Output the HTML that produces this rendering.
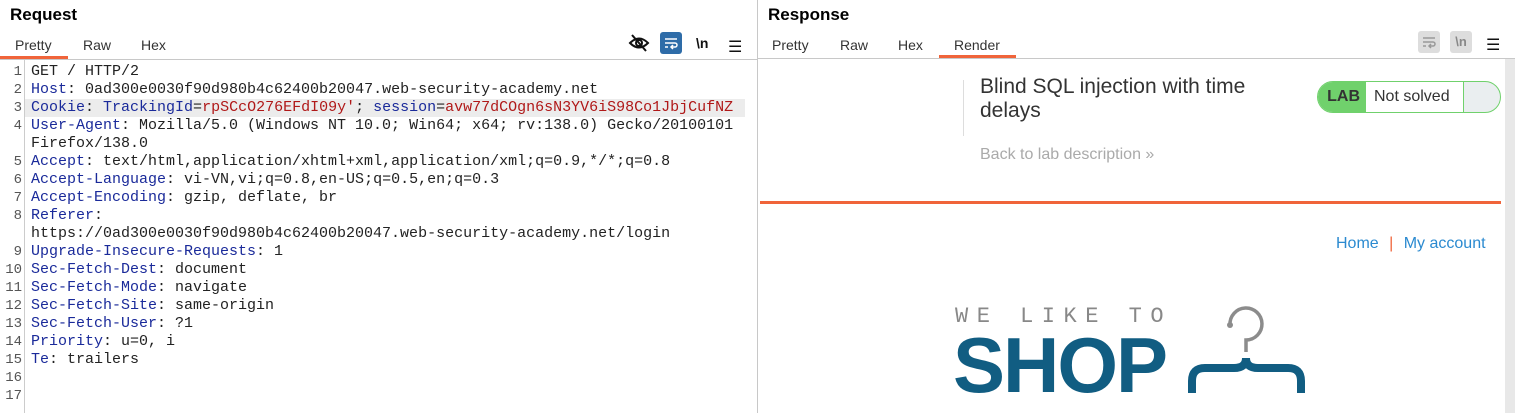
<!DOCTYPE html>
<html><head><style>
*{margin:0;padding:0;box-sizing:border-box}
body{width:1515px;height:413px;overflow:hidden;background:#fff;font-family:"Liberation Sans",sans-serif;position:relative}
.abs{position:absolute}
.h{font-weight:bold;font-size:17px;color:#000}
.tab{position:absolute;font-size:14px;color:#333;top:37px}
.code{position:absolute;left:31px;top:63px;font-family:"Liberation Mono",monospace;font-size:15px;line-height:18px;color:#222;white-space:pre}
.nums{position:absolute;left:0;width:22px;top:63px;font-family:"Liberation Mono",monospace;font-size:14px;line-height:18px;color:#555;text-align:right}
.k{color:#1a2a9a}.v{color:#b01818}
</style></head><body>
<div class="abs h" style="left:10px;top:5px">Request</div>
<div class="tab" style="left:15px">Pretty</div>
<div class="tab" style="left:83px">Raw</div>
<div class="tab" style="left:141px">Hex</div>
<div class="abs" style="left:0;top:56px;width:68px;height:3px;background:#f0643a"></div>
<div class="abs" style="left:0;top:59px;width:757px;height:1px;background:#c8c8c8"></div>
<svg class="abs" style="left:628px;top:33px" width="22" height="20" viewBox="0 0 22 20"><path d="M2 10 Q11 1 20 10 Q11 19 2 10Z" fill="none" stroke="#111" stroke-width="2"/><circle cx="11" cy="10" r="3" fill="none" stroke="#111" stroke-width="2"/><path d="M4 2 L18 18" stroke="#111" stroke-width="2"/></svg>
<div class="abs" style="left:660px;top:32px;width:22px;height:22px;border-radius:3px;background:#2e6ca8"></div>
<svg class="abs" style="left:663px;top:35px" width="16" height="16" viewBox="0 0 16 16"><path d="M2 4H14M2 8H12a2 2 0 0 1 0 4H8M10 10L8 12L10 14M2 12H5" fill="none" stroke="#fff" stroke-width="1.5"/></svg>
<div class="abs" style="left:696px;top:35px;font-size:14px;font-weight:bold;color:#111">\n</div>
<div class="abs" style="left:728px;top:37px;font-size:16px;color:#111">☰</div>
<div class="abs" style="left:24px;top:60px;width:1px;height:353px;background:#ccc"></div>
<div class="abs" style="left:25px;top:99px;width:720px;height:18px;background:#ececec"></div>
<div class="nums">1<br>2<br>3<br>4<br><br>5<br>6<br>7<br>8<br><br>9<br>10<br>11<br>12<br>13<br>14<br>15<br>16<br>17</div>
<div class="code">GET / HTTP/2
<span class="k">Host</span>: 0ad300e0030f90d980b4c62400b20047.web-security-academy.net
<span class="k">Cookie</span>: <span class="k">TrackingId</span>=<span class="v">rpSCcO276EFdI09y'</span>; <span class="k">session</span>=<span class="v">avw77dCOgn6sN3YV6iS98Co1JbjCufNZ</span>
<span class="k">User-Agent</span>: Mozilla/5.0 (Windows NT 10.0; Win64; x64; rv:138.0) Gecko/20100101
Firefox/138.0
<span class="k">Accept</span>: text/html,application/xhtml+xml,application/xml;q=0.9,*/*;q=0.8
<span class="k">Accept-Language</span>: vi-VN,vi;q=0.8,en-US;q=0.5,en;q=0.3
<span class="k">Accept-Encoding</span>: gzip, deflate, br
<span class="k">Referer</span>:
https://0ad300e0030f90d980b4c62400b20047.web-security-academy.net/login
<span class="k">Upgrade-Insecure-Requests</span>: 1
<span class="k">Sec-Fetch-Dest</span>: document
<span class="k">Sec-Fetch-Mode</span>: navigate
<span class="k">Sec-Fetch-Site</span>: same-origin
<span class="k">Sec-Fetch-User</span>: ?1
<span class="k">Priority</span>: u=0, i
<span class="k">Te</span>: trailers</div>
<div class="abs" style="left:757px;top:0;width:1px;height:413px;background:#c8c8c8"></div>

<div class="abs h" style="left:768px;top:5px">Response</div>
<div class="tab" style="left:772px;top:37px">Pretty</div>
<div class="tab" style="left:840px;top:37px">Raw</div>
<div class="tab" style="left:898px;top:37px">Hex</div>
<div class="tab" style="left:954px;top:37px">Render</div>
<div class="abs" style="left:939px;top:55px;width:77px;height:3px;background:#f0643a"></div>
<div class="abs" style="left:758px;top:58px;width:757px;height:1px;background:#c8c8c8"></div>
<div class="abs" style="left:1418px;top:31px;width:22px;height:22px;border-radius:3px;background:#ddd"></div>
<div class="abs" style="left:1450px;top:31px;width:22px;height:22px;border-radius:3px;background:#ddd;font-size:13px;color:#888;text-align:center;line-height:22px;font-weight:bold">\n</div>
<svg class="abs" style="left:1421px;top:34px" width="16" height="16" viewBox="0 0 16 16"><path d="M2 4H14M2 8H12a2 2 0 0 1 0 4H8M10 10L8 12L10 14M2 12H5" fill="none" stroke="#999" stroke-width="1.5"/></svg>
<div class="abs" style="left:1486px;top:35px;font-size:16px;color:#111">☰</div>
<div class="abs" style="left:1505px;top:59px;width:10px;height:354px;background:#e8e8e8"></div>

<div class="abs" style="left:963px;top:80px;width:1px;height:56px;background:#ddd"></div>
<div class="abs" style="left:980px;top:75px;font-size:21px;line-height:24px;color:#333">Blind SQL injection with time<br>delays</div>
<div class="abs" style="left:980px;top:146px;font-size:16px;color:#aaa">Back to lab description »</div>
<div class="abs" style="left:1317px;top:81px;width:184px;height:32px;border:1px solid #70d16c;border-radius:16px;background:#eaeef0;overflow:hidden">
<div class="abs" style="left:0;top:0;width:48px;height:30px;background:#70d16c;font-weight:bold;font-size:16px;color:#333;line-height:30px;text-align:right;padding-right:6px">LAB</div>
<div class="abs" style="left:48px;top:0;width:98px;height:30px;background:#fff;border-right:1px solid #70d16c;font-size:16px;color:#333;line-height:30px;padding-left:8px">Not solved</div>
</div>
<div class="abs" style="left:760px;top:201px;width:741px;height:3px;background:#f0643a"></div>
<div class="abs" style="left:1336px;top:235px;font-size:16px;color:#2b8ad0">Home <span style="color:#f0643a;margin:0 6px">|</span> My account</div>
<div class="abs" style="left:955px;top:304px;font-family:'Liberation Mono',monospace;font-size:22px;color:#888;letter-spacing:8.5px">WE LIKE TO</div>
<div class="abs" style="left:953px;top:325px;font-weight:bold;font-size:78px;line-height:80px;color:#115d82;letter-spacing:-2px">SHOP</div>
<svg class="abs" style="left:1180px;top:300px" width="135" height="100" viewBox="0 0 135 100"><path d="M50 25 A16 16 0 1 1 66 40 V52" fill="none" stroke="#8c8c8c" stroke-width="3.5"/><circle cx="50" cy="25" r="3" fill="#8c8c8c"/><path d="M12 93 V81 Q12 68 25 68 H54 Q66 68 66 58 Q66 68 78 68 H108 Q121 68 121 81 V93" fill="none" stroke="#115d82" stroke-width="8"/></svg>
</body></html>
